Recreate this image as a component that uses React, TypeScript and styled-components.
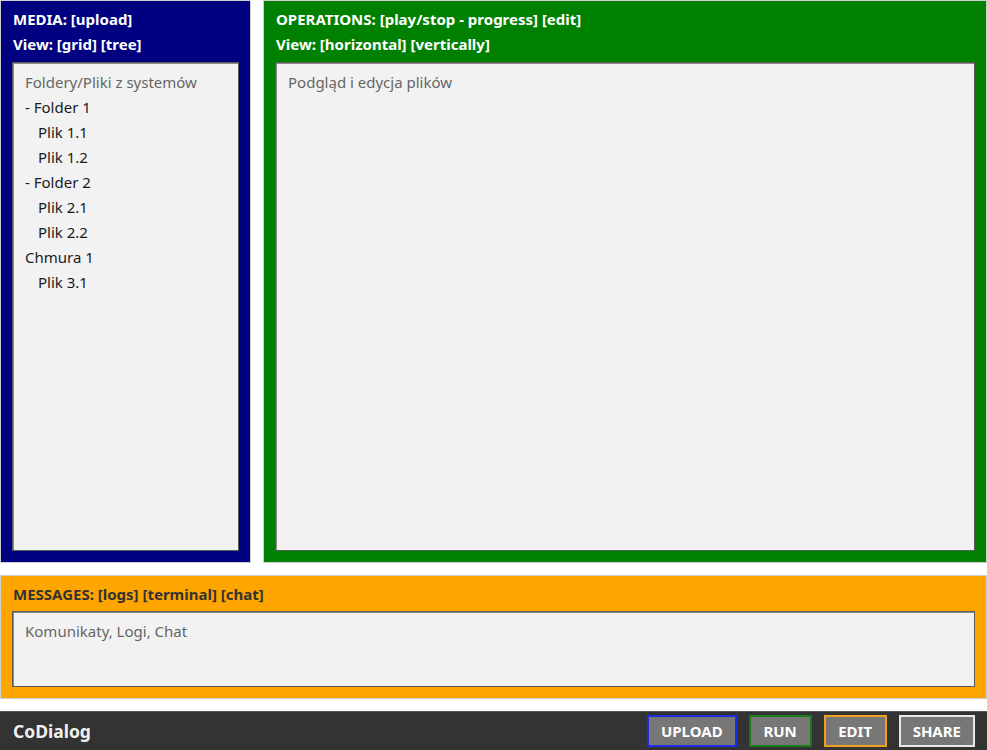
import styled, { createGlobalStyle } from "styled-components";

const GlobalStyle = createGlobalStyle`
  html, body {
    margin: 0;
    padding: 0;
    background: #ffffff;
    font-family: "Noto Sans", "Open Sans", sans-serif;
  }
`;

const Layout = styled.div`
  display: grid;
  grid-template-columns: 251px 1fr;
  grid-template-rows: 563px 124px 39px;
  column-gap: 12px;
  row-gap: 12px;
  width: 987px;
  height: 750px;
  box-sizing: border-box;
`;

const Panel = styled.section<{ $bg: string; $fg: string; $wide?: boolean }>`
  display: flex;
  flex-direction: column;
  box-sizing: border-box;
  background: ${(p) => p.$bg};
  color: ${(p) => p.$fg};
  border: 1px solid #cfcfcf;
  padding: 8px 11px 11px 11px;
  min-height: 0;
  ${(p) => (p.$wide ? "grid-column: 1 / span 2;" : "")}
`;

const Title = styled.div`
  font-size: 15px;
  font-weight: 700;
  line-height: 20px;
  padding-left: 1px;
  margin-bottom: 5px;
`;

const Content = styled.div<{ $gap?: number }>`
  flex: 1;
  box-sizing: border-box;
  margin-top: ${(p) => p.$gap ?? 3}px;
  background: #f2f2f2;
  border: 1px solid #5a5a5a;
  box-shadow: inset 1px 1px 0 #8a8a8a;
  padding: 7px 12px;
  font-size: 15px;
  line-height: 25px;
  color: #222;
`;

const Hint = styled.div`
  color: #666;
`;

const TreeItem = styled.div<{ $level: number }>`
  padding-left: ${(p) => p.$level * 13}px;
  color: #1a1a1a;
`;

const Footer = styled.footer`
  grid-column: 1 / span 2;
  display: flex;
  align-items: center;
  justify-content: space-between;
  box-sizing: border-box;
  background: #333333;
  border-top: 1px solid #555;
  padding: 0 12px 0 13px;
`;

const Brand = styled.div`
  color: #f0f0f0;
  font-size: 17.5px;
  font-weight: 700;
`;

const Actions = styled.div`
  display: flex;
  gap: 12px;
`;

const ActionButton = styled.button<{ $accent: string }>`
  box-sizing: border-box;
  height: 32px;
  min-width: 63px;
  padding: 0 12px;
  background: #777777;
  border: 2px solid ${(p) => p.$accent};
  color: #ffffff;
  font-family: "Noto Sans", "Open Sans", sans-serif;
  font-size: 15px;
  font-weight: 700;
  cursor: pointer;
`;

const tree = [
  { label: "- Folder 1", level: 0 },
  { label: "Plik 1.1", level: 1 },
  { label: "Plik 1.2", level: 1 },
  { label: "- Folder 2", level: 0 },
  { label: "Plik 2.1", level: 1 },
  { label: "Plik 2.2", level: 1 },
  { label: "Chmura 1", level: 0 },
  { label: "Plik 3.1", level: 1 },
];

const buttons = [
  { label: "UPLOAD", accent: "#1f2fe0" },
  { label: "RUN", accent: "#1a7a1a" },
  { label: "EDIT", accent: "#f0a020" },
  { label: "SHARE", accent: "#e8e8e8" },
];

export default function App() {
  return (
    <>
      <GlobalStyle />
      <Layout>
        <Panel $bg="#000080" $fg="#ffffff">
          <Title>MEDIA: [upload]</Title>
          <Title>View: [grid] [tree]</Title>
          <Content>
            <Hint>Foldery/Pliki z systemów</Hint>
            {tree.map((item) => (
              <TreeItem key={item.label} $level={item.level}>
                {item.label}
              </TreeItem>
            ))}
          </Content>
        </Panel>
        <Panel $bg="#008000" $fg="#ffffff">
          <Title>OPERATIONS: [play/stop - progress] [edit]</Title>
          <Title>View: [horizontal] [vertically]</Title>
          <Content>
            <Hint>Podgląd i edycja plików</Hint>
          </Content>
        </Panel>
        <Panel $bg="#ffa500" $fg="#333333" $wide>
          <Title>MESSAGES: [logs] [terminal] [chat]</Title>
          <Content $gap={2}>
            <Hint>Komunikaty, Logi, Chat</Hint>
          </Content>
        </Panel>
        <Footer>
          <Brand>CoDialog</Brand>
          <Actions>
            {buttons.map((b) => (
              <ActionButton key={b.label} $accent={b.accent}>
                {b.label}
              </ActionButton>
            ))}
          </Actions>
        </Footer>
      </Layout>
    </>
  );
}
